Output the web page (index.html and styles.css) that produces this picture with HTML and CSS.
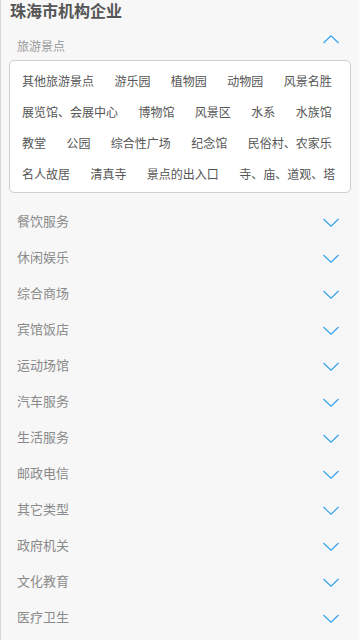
FILE: index.html
```html
<!DOCTYPE html>
<html lang="zh-CN">
<head>
<meta charset="utf-8">
<title>珠海市机构企业</title>
<link rel="stylesheet" href="styles.css">
</head>
<body>
<div class="page">
  <h1 class="title">珠海市机构企业</h1>

  <div class="cat open">
    <div class="cat-head">
      <span class="cat-name">旅游景点</span>
      <svg class="chev up" width="16" height="9" viewBox="0 0 16 9"><polyline points="0.5,8 8,0.8 15.5,8" fill="none" stroke="#2f9ff0" stroke-width="1.1"/></svg>
    </div>
    <div class="box">
      <span class="item">其他旅游景点</span>
      <span class="item">游乐园</span>
      <span class="item">植物园</span>
      <span class="item">动物园</span>
      <span class="item">风景名胜</span>
      <span class="item">展览馆、会展中心</span>
      <span class="item">博物馆</span>
      <span class="item">风景区</span>
      <span class="item">水系</span>
      <span class="item">水族馆</span>
      <span class="item">教堂</span>
      <span class="item">公园</span>
      <span class="item">综合性广场</span>
      <span class="item">纪念馆</span>
      <span class="item">民俗村、农家乐</span>
      <span class="item">名人故居</span>
      <span class="item">清真寺</span>
      <span class="item">景点的出入口</span>
      <span class="item">寺、庙、道观、塔</span>
    </div>
  </div>

  <div class="cat"><div class="cat-head"><span class="cat-name">餐饮服务</span><svg class="chev" width="16" height="9" viewBox="0 0 16 9"><polyline points="0.5,1 8,8.2 15.5,1" fill="none" stroke="#2f9ff0" stroke-width="1.1"/></svg></div></div>
  <div class="cat"><div class="cat-head"><span class="cat-name">休闲娱乐</span><svg class="chev" width="16" height="9" viewBox="0 0 16 9"><polyline points="0.5,1 8,8.2 15.5,1" fill="none" stroke="#2f9ff0" stroke-width="1.1"/></svg></div></div>
  <div class="cat"><div class="cat-head"><span class="cat-name">综合商场</span><svg class="chev" width="16" height="9" viewBox="0 0 16 9"><polyline points="0.5,1 8,8.2 15.5,1" fill="none" stroke="#2f9ff0" stroke-width="1.1"/></svg></div></div>
  <div class="cat"><div class="cat-head"><span class="cat-name">宾馆饭店</span><svg class="chev" width="16" height="9" viewBox="0 0 16 9"><polyline points="0.5,1 8,8.2 15.5,1" fill="none" stroke="#2f9ff0" stroke-width="1.1"/></svg></div></div>
  <div class="cat"><div class="cat-head"><span class="cat-name">运动场馆</span><svg class="chev" width="16" height="9" viewBox="0 0 16 9"><polyline points="0.5,1 8,8.2 15.5,1" fill="none" stroke="#2f9ff0" stroke-width="1.1"/></svg></div></div>
  <div class="cat"><div class="cat-head"><span class="cat-name">汽车服务</span><svg class="chev" width="16" height="9" viewBox="0 0 16 9"><polyline points="0.5,1 8,8.2 15.5,1" fill="none" stroke="#2f9ff0" stroke-width="1.1"/></svg></div></div>
  <div class="cat"><div class="cat-head"><span class="cat-name">生活服务</span><svg class="chev" width="16" height="9" viewBox="0 0 16 9"><polyline points="0.5,1 8,8.2 15.5,1" fill="none" stroke="#2f9ff0" stroke-width="1.1"/></svg></div></div>
  <div class="cat"><div class="cat-head"><span class="cat-name">邮政电信</span><svg class="chev" width="16" height="9" viewBox="0 0 16 9"><polyline points="0.5,1 8,8.2 15.5,1" fill="none" stroke="#2f9ff0" stroke-width="1.1"/></svg></div></div>
  <div class="cat"><div class="cat-head"><span class="cat-name">其它类型</span><svg class="chev" width="16" height="9" viewBox="0 0 16 9"><polyline points="0.5,1 8,8.2 15.5,1" fill="none" stroke="#2f9ff0" stroke-width="1.1"/></svg></div></div>
  <div class="cat"><div class="cat-head"><span class="cat-name">政府机关</span><svg class="chev" width="16" height="9" viewBox="0 0 16 9"><polyline points="0.5,1 8,8.2 15.5,1" fill="none" stroke="#2f9ff0" stroke-width="1.1"/></svg></div></div>
  <div class="cat"><div class="cat-head"><span class="cat-name">文化教育</span><svg class="chev" width="16" height="9" viewBox="0 0 16 9"><polyline points="0.5,1 8,8.2 15.5,1" fill="none" stroke="#2f9ff0" stroke-width="1.1"/></svg></div></div>
  <div class="cat"><div class="cat-head"><span class="cat-name">医疗卫生</span><svg class="chev" width="16" height="9" viewBox="0 0 16 9"><polyline points="0.5,1 8,8.2 15.5,1" fill="none" stroke="#2f9ff0" stroke-width="1.1"/></svg></div></div>
</div>
</body>
</html>
```
FILE: styles.css
```css
html, body {
  margin: 0;
  padding: 0;
  background: #f7f7f7;
}
body {
  font-family: "Noto Sans CJK SC", "Noto Sans", sans-serif;
  overflow: hidden;
}
.page {
  width: 360px;
  height: 640px;
  box-sizing: border-box;
  border-left: 1px solid #d6d6d6;
  border-right: 1px solid #fbfbfb;
  background: #f7f7f7;
  overflow: hidden;
}
.title {
  margin: 0;
  padding-left: 9px;
  font-size: 16px;
  line-height: 21px;
  font-weight: bold;
  color: #555;
}
.cat-head {
  display: flex;
  align-items: center;
  justify-content: space-between;
  height: 36px;
  padding: 0 20px 0 16px;
}
.cat-name {
  font-size: 13px;
  color: #8a8a8a;
  line-height: 20px;
}
.chev {
  display: block;
  margin-top: 2px;
}
.open .cat-head {
  height: 26px;
  padding-top: 13px;
  align-items: flex-start;
}
.open .cat-name {
  font-size: 12px;
  line-height: 24px;
  color: #999;
}
.open .chev {
  margin-top: 1px;
}
.box {
  margin: 0 8px 10px 8px;
  padding: 4px 12px 3px;
  background: #fff;
  border: 1px solid #cfcfcf;
  border-radius: 5px;
  display: flex;
  flex-wrap: wrap;
  column-gap: 20.4px;
}
.item {
  font-size: 12px;
  line-height: 31px;
  color: #555;
  white-space: nowrap;
}
```
